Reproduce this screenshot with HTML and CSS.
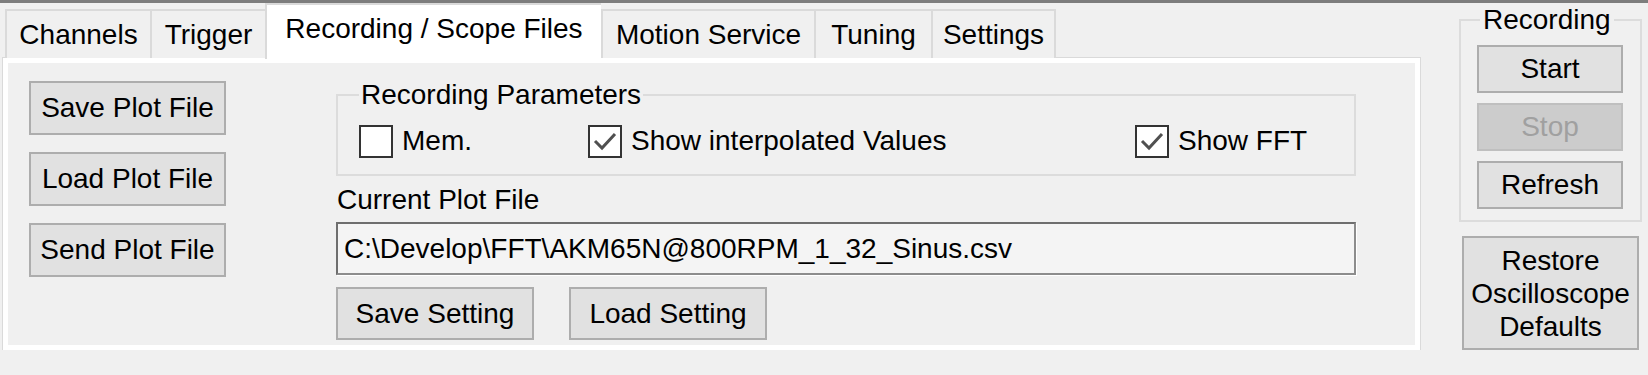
FILE: index.html
```html
<!DOCTYPE html>
<html>

<head>
   <title>Recording / Scope Files</title>
   <link rel="stylesheet" href="styles.css">
</head>

<body>
   <div class="window">
      <div class="tabctl">
         <div class="tabstrip">
            <div class="tab tab-channels">Channels</div>
            <div class="tab tab-trigger">Trigger</div>
            <div class="tab tab-files active">Recording / Scope Files</div>
            <div class="tab tab-motion">Motion Service</div>
            <div class="tab tab-tuning">Tuning</div>
            <div class="tab tab-settings">Settings</div>
         </div>

         <div class="page">
            <div class="file-buttons">
               <button class="btn">Save Plot File</button>
               <button class="btn">Load Plot File</button>
               <button class="btn">Send Plot File</button>
            </div>

            <div class="file-area">
               <fieldset class="group params">
                  <legend>Recording Parameters</legend>
                  <div class="checks">
                     <label class="check"><span class="box"></span>Mem.</label>
                     <label class="check">
                        <span class="box">
                           <svg viewBox="0 0 30 29" width="30" height="29"><polyline points="5,14 12,21 25,7" fill="none" stroke="#505050" stroke-width="3"/></svg>
                        </span>Show interpolated Values
                     </label>
                     <label class="check">
                        <span class="box">
                           <svg viewBox="0 0 30 29" width="30" height="29"><polyline points="5,14 12,21 25,7" fill="none" stroke="#505050" stroke-width="3"/></svg>
                        </span>Show FFT
                     </label>
                  </div>
               </fieldset>

               <div class="field-label">Current Plot File</div>
               <div class="path">C:\Develop\FFT\AKM65N@800RPM_1_32_Sinus.csv</div>

               <div class="setting-buttons">
                  <button class="btn">Save Setting</button>
                  <button class="btn">Load Setting</button>
               </div>
            </div>
         </div>
      </div>

      <div class="side">
         <fieldset class="group recording">
            <legend>Recording</legend>
            <div class="rec-buttons">
               <button class="btn">Start</button>
               <button class="btn" disabled>Stop</button>
               <button class="btn">Refresh</button>
            </div>
         </fieldset>
         <button class="btn restore">Restore<br>Oscilloscope<br>Defaults</button>
      </div>
   </div>
</body>

</html>
```

FILE: styles.css
```css
body {
   margin: 0;
   background-color: #f0f0f0;
   font-family: "Liberation Sans", Arial, sans-serif;
   font-size: 28px;
   line-height: 28px;
   color: #000;
}

.window {
   display: flex;
   align-items: flex-start;
   border-top: 3px solid #7d7d7d;
}

/* tab control */
.tabctl {
   margin-left: 3px;
   width: 1417px;
}

.tabstrip {
   display: flex;
   align-items: flex-end;
   height: 55px;
   padding-left: 2px;
}

.tab {
   box-sizing: border-box;
   height: 49px;
   display: flex;
   align-items: center;
   justify-content: center;
   border: 2px solid #dadada;
   border-bottom: 0;
   border-right: 0;
   background-color: #f0f0f0;
   white-space: nowrap;
}

.tab:last-child {
   border-right: 2px solid #dadada;
}

.tab.active {
   height: 56px;
   margin-bottom: -1px;
   padding-bottom: 6px;
   background-color: #fff;
   position: relative;
   z-index: 1;
}

.tab-channels { width: 145px; }
.tab-trigger { width: 115px; }
.tab-files { width: 336px; }
.tab-motion { width: 213px; }
.tab-tuning { width: 117px; }
.tab-settings { width: 125px; }

.page {
   box-sizing: border-box;
   height: 292px;
   border: 5px solid #fff;
   box-shadow: 0 0 0 1px #dadada;
   display: flex;
   gap: 110px;
   padding: 18px 0 0 21px;
}

/* buttons */
.btn {
   box-sizing: border-box;
   font: inherit;
   line-height: 28px;
   color: #000;
   background-color: #e1e1e1;
   border: 2px solid #adadad;
   padding: 0;
   margin: 0;
}

.btn:disabled {
   background-color: #cccccc;
   border-color: #bfbfbf;
   color: #a0a0a0;
}

.file-buttons {
   display: flex;
   flex-direction: column;
   gap: 17px;
}

.file-buttons .btn {
   width: 197px;
   height: 54px;
}

/* middle part */
.file-area {
   width: 1020px;
}

.group {
   margin: 0;
   border: 2px solid #dcdcdc;
   min-width: 0;
}

.group legend {
   padding: 0 2px;
   line-height: 28px;
}

.params {
   padding: 15px 21px 16px;
}

.checks {
   display: grid;
   grid-template-columns: 229px 547px auto;
}

.check {
   display: flex;
   align-items: center;
   gap: 9px;
   height: 34px;
   white-space: nowrap;
}

.box {
   box-sizing: border-box;
   width: 34px;
   height: 33px;
   border: 2px solid #333;
   background-color: #fff;
   display: flex;
}

.field-label {
   margin-top: 10px;
   padding-left: 1px;
}

.path {
   box-sizing: border-box;
   margin-top: 8px;
   height: 53px;
   border: 2px solid #8c8c8c;
   border-top-color: #6e6e6e;
   border-left-color: #6e6e6e;
   box-shadow: 1px 1px 0 #fff;
   background-color: #f4f4f4;
   padding: 0 6px;
   display: flex;
   align-items: center;
   white-space: nowrap;
}

.setting-buttons {
   display: flex;
   gap: 35px;
   margin-top: 12px;
}

.setting-buttons .btn {
   width: 198px;
   height: 53px;
}

/* right side */
.side {
   margin-left: 39px;
   margin-top: 3px;
   width: 183px;
   display: flex;
   flex-direction: column;
}

.recording {
   padding: 11px 17px 11px 16px;
}

.recording legend {
   margin-left: 3px;
   padding: 0 3px;
}

.rec-buttons {
   display: flex;
   flex-direction: column;
   gap: 10px;
}

.rec-buttons .btn {
   width: 146px;
   height: 48px;
}

.restore {
   margin-top: 14px;
   margin-left: 3px;
   width: 177px;
   height: 114px;
   line-height: 33px;
}
```
